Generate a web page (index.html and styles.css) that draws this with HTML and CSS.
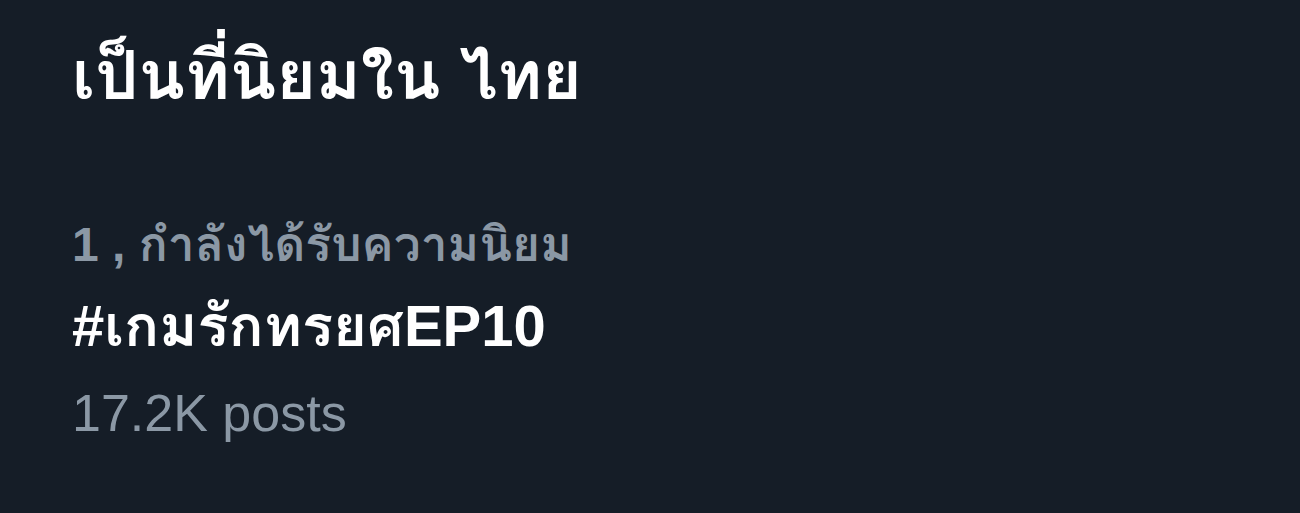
FILE: index.html
```html
<!DOCTYPE html>
<html lang="th">
<head>
    <meta charset="UTF-8">
    <meta name="viewport" content="width=device-width, initial-scale=1.0">
    <title>เป็นที่นิยมใน ไทย</title>
    <link rel="stylesheet" href="styles.css">
</head>
<body>

    <div class="trends">
        <h2 class="trends-title">เป็นที่นิยมใน ไทย</h2>

        <div class="trend-item">
            <div class="trend-context">1 , กำลังได้รับความนิยม</div>
            <div class="trend-name">#เกมรักทรยศEP10</div>
            <div class="trend-count">17.2K posts</div>
        </div>
    </div>

</body>
</html>
```

FILE: styles.css
```css
body {
    background-color: #151d27;
    font-family: "Liberation Sans", "Loma", "Noto Sans Thai", Arial, sans-serif;
    margin: 0;
    height: 100vh;
    overflow: hidden;
}

.trends {
    padding: 30px 72px;
}

.trends-title {
    color: #ffffff;
    font-size: 68px;
    font-weight: bold;
    line-height: 90px;
    margin: 0;
}

.trend-item {
    margin-top: 90px;
}

.trend-context {
    color: #8b98a5;
    font-size: 48px;
    font-weight: bold;
    line-height: 70px;
}

.trend-name {
    color: #ffffff;
    font-size: 58px;
    font-weight: bold;
    line-height: 80px;
    margin-top: 6px;
}

.trend-count {
    color: #8b98a5;
    font-size: 52px;
    line-height: 70px;
    margin-top: 12px;
}
```
